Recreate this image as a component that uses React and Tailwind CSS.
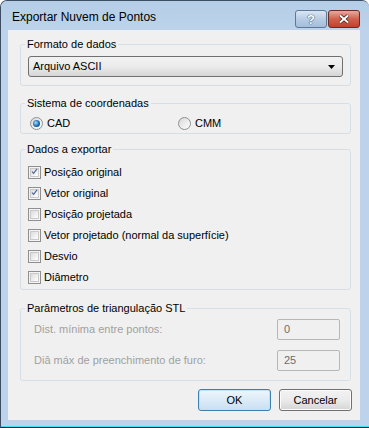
import React from 'react';

const font = { fontFamily: '"Liberation Sans", Arial, sans-serif' };

function Checkbox({ checked, label }) {
  return (
    <div className="flex items-center h-[21px]">
      <span className="w-[13px] h-[13px] border border-[#8f8f8f] bg-[#f4f4f4] flex items-center justify-center">
        <span className="w-[9px] h-[9px] border border-[#c9c9c9] bg-gradient-to-br from-[#dcdcdc] to-[#ffffff] flex items-center justify-center">
          {checked && (
            <svg width="11" height="11" viewBox="0 0 11 11" className="-mt-[2px]">
              <path d="M1.5 5.5 L4 8.5 L9.5 1.5" fill="none" stroke="#4c6392" strokeWidth="1.8" />
            </svg>
          )}
        </span>
      </span>
      <span className="ml-[3px] text-[11px] text-black">{label}</span>
    </div>
  );
}

function Radio({ checked, label }) {
  return (
    <div className="flex items-center h-[16px]">
      <span className="w-[13px] h-[13px] rounded-full border border-[#8e8f8f] bg-gradient-to-br from-[#d8d8d8] to-[#ffffff] flex items-center justify-center">
        {checked && (
          <span className="w-[7px] h-[7px] rounded-full bg-[radial-gradient(circle_at_40%_40%,#a6e1ff,#1c69ae_55%,#0d3a6e)]" />
        )}
      </span>
      <span className="ml-[4px] text-[11px] text-black">{label}</span>
    </div>
  );
}

function Group({ title, className, children }) {
  return (
    <fieldset className={`mx-[9px] ml-[12px] border border-[#d5dfe5] rounded-[3px] px-[7px] ${className}`}>
      <legend className="-ml-[3px] px-[2px] text-[11px] leading-[14px] text-black">{title}</legend>
      {children}
    </fieldset>
  );
}

function TextBox({ value }) {
  return (
    <div className="w-[63px] h-[21px] border border-[#b7b7b7] rounded-[2px] bg-[#f0f0f0] flex items-center pl-[6px] text-[11px] text-[#6d6d6d]">
      {value}
    </div>
  );
}

function DialogButton({ children, primary }) {
  return (
    <button
      className={`w-[73px] h-[22px] rounded-[3px] border text-[11px] text-black ${
        primary
          ? 'border-[#3c7fb1] bg-gradient-to-b from-[#eef6fc] via-[#dcebf7] to-[#c8e0f3] shadow-[inset_0_0_0_1px_#bfe4f9]'
          : 'border-[#707070] bg-gradient-to-b from-[#f2f2f2] via-[#ebebeb] to-[#d5d5d5] shadow-[inset_0_0_0_1px_#fcfcfc]'
      }`}
    >
      {children}
    </button>
  );
}

export default function App() {
  return (
    <div style={font} className="w-[369px] h-[428px] bg-[#bcd3eb] border-l border-t border-[#3d4e62] rounded-t-[7px] flex flex-col overflow-hidden">
      {/* title bar */}
      <div className="h-[29px] flex items-start bg-gradient-to-b from-[#b6cde7] to-[#bcd3eb]">
        <span className="ml-[11px] mt-[9px] text-[12px] leading-[14px] text-black">Exportar Nuvem de Pontos</span>
        <div className="ml-auto mr-[9px] mt-[9px] flex gap-[1px]">
          <div className="w-[32px] h-[18px] rounded-[3px] border border-[#5f7894] bg-gradient-to-b from-[#d9e6f4] via-[#b8cde5] to-[#a3bddc] flex items-center justify-center">
            <span className="text-[13px] font-bold text-white leading-none [text-shadow:0_0_1px_#2c3e55,0_0_1px_#2c3e55]">?</span>
          </div>
          <div className="w-[32px] h-[18px] rounded-[3px] border border-[#6b2a23] bg-gradient-to-b from-[#e9a99c] via-[#d0604c] to-[#c0422c] flex items-center justify-center">
            <svg width="12" height="10" viewBox="0 0 12 10">
              <path d="M2 1.5 L10 8.5 M10 1.5 L2 8.5" stroke="#3d1a14" strokeWidth="3.4" />
              <path d="M2 1.5 L10 8.5 M10 1.5 L2 8.5" stroke="#ffffff" strokeWidth="2" />
            </svg>
          </div>
        </div>
      </div>

      {/* client area */}
      <div className="ml-[7px] mr-[9px] h-[390px] bg-[#f0f0f0] flex flex-col">
        <Group title="Formato de dados" className="mt-[7px] pb-[8px]">
          <div className="mt-[5px] h-[21px] rounded-[3px] border border-[#707070] bg-gradient-to-b from-[#f2f2f2] via-[#ebebeb] to-[#d6d6d6] flex items-center pl-[4px] pr-[7px] text-[11px] text-black">
            <span>Arquivo ASCII</span>
            <svg className="ml-auto" width="7" height="4" viewBox="0 0 7 4">
              <path d="M0 0 H7 L3.5 4 Z" fill="#000" />
            </svg>
          </div>
        </Group>

        <Group title="Sistema de coordenadas" className="mt-[10px] pb-[2px]">
          <div className="mt-[5px] flex pl-[2px]">
            <div className="w-[148px]">
              <Radio checked label="CAD" />
            </div>
            <Radio label="CMM" />
          </div>
        </Group>

        <Group title="Dados a exportar" className="mt-[8px] pb-[1px]">
          <div className="mt-[6px] flex flex-col">
            <Checkbox checked label="Posição original" />
            <Checkbox checked label="Vetor original" />
            <Checkbox label="Posição projetada" />
            <Checkbox label="Vetor projetado (normal da superfície)" />
            <Checkbox label="Desvio" />
            <Checkbox label="Diâmetro" />
          </div>
        </Group>

        <Group title="Parâmetros de triangulação STL" className="mt-[11px] pb-[9px]">
          <div className="mt-[4px] flex flex-col gap-[10px] pl-[6px] pr-[3px]">
            <div className="flex items-center justify-between h-[21px]">
              <span className="text-[11px] text-[#a0a0a0]">Dist. mínima entre pontos:</span>
              <TextBox value="0" />
            </div>
            <div className="flex items-center justify-between h-[21px]">
              <span className="text-[11px] text-[#a0a0a0]">Diâ máx de preenchimento de furo:</span>
              <TextBox value="25" />
            </div>
          </div>
        </Group>

        <div className="mt-[8px] mr-[8px] flex justify-end gap-[8px]">
          <DialogButton primary>OK</DialogButton>
          <DialogButton>Cancelar</DialogButton>
        </div>
      </div>

      <div className="mt-auto h-[1px] bg-[#3fe0f0]" />
      <div className="h-[1px] bg-[#1a2633]" />
    </div>
  );
}
